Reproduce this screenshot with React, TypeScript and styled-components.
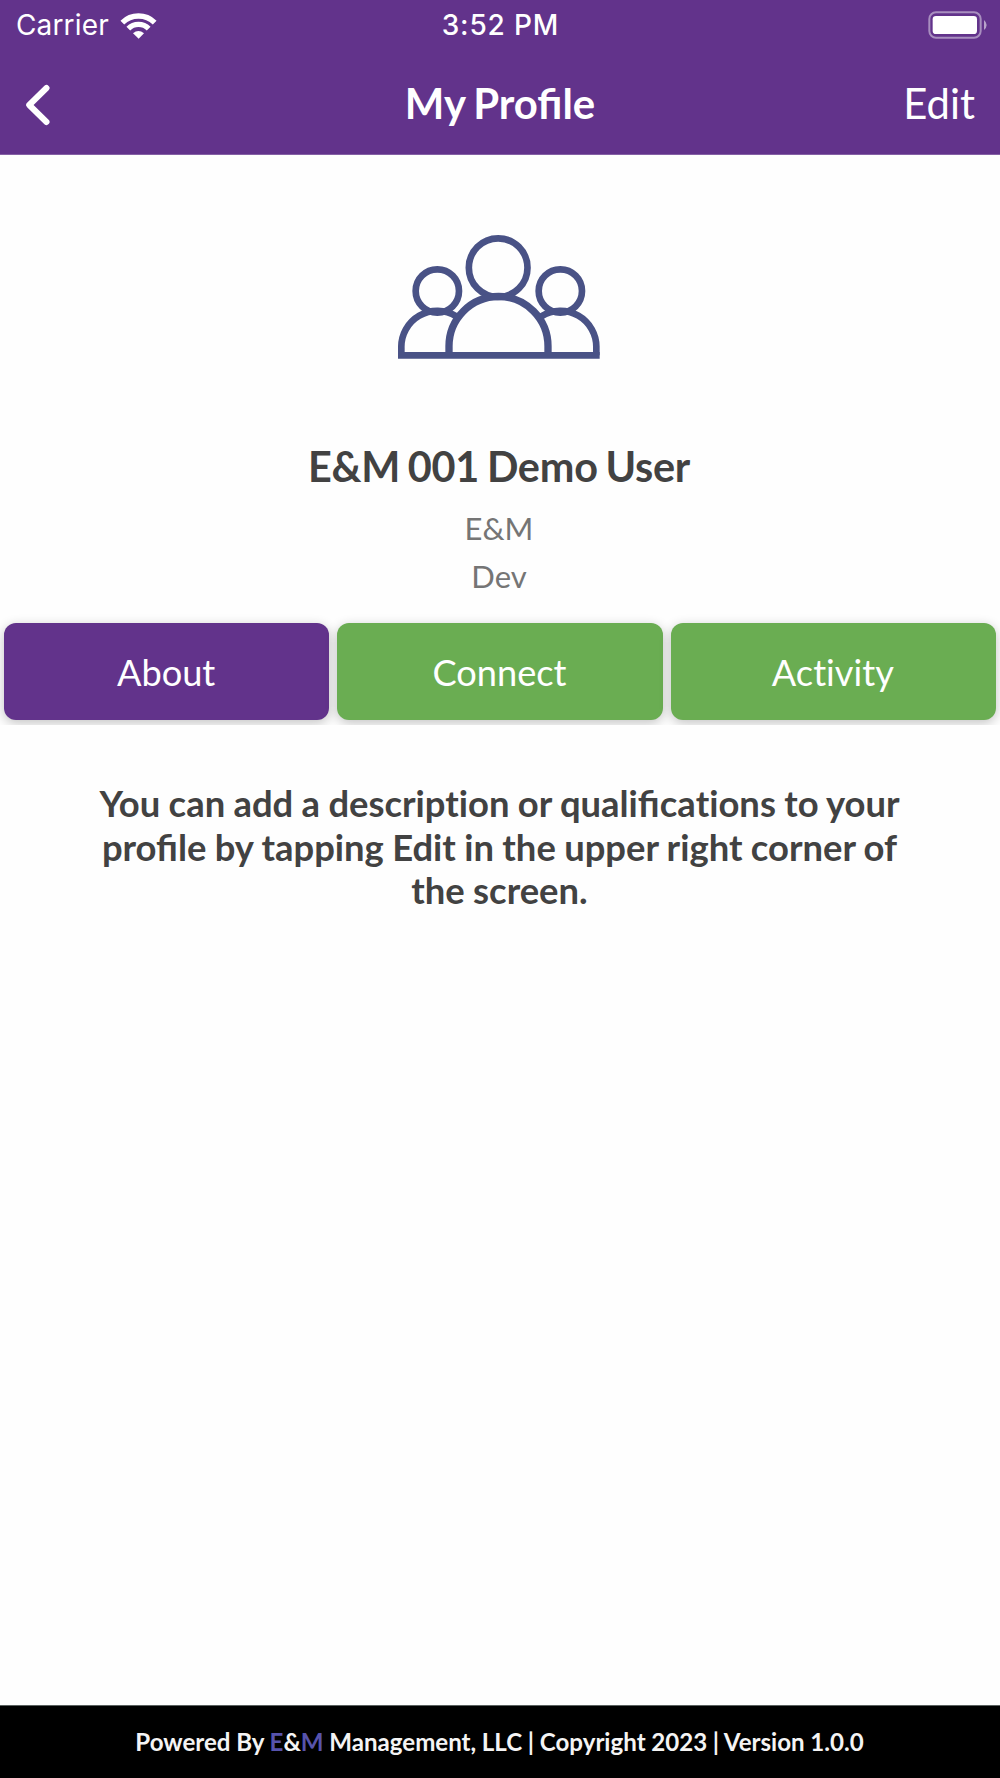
import React from "react";
import styled, { createGlobalStyle } from "styled-components";

const GlobalStyle = createGlobalStyle`
  body { margin: 0; background: #fefefe; }
  * { box-sizing: border-box; }
`;

const Screen = styled.div`
  display: flex;
  flex-direction: column;
  height: 1778px;
  width: 1000px;
  background: #fefefe;
  font-family: Lato, "Open Sans", sans-serif;
  color: #424242;
`;

const Header = styled.header`
  height: 155px;
  background: #62338b;
  color: #fff;
  border-bottom: 1px solid #8560a5;
`;

const StatusBar = styled.div`
  display: grid;
  grid-template-columns: 1fr auto 1fr;
  align-items: center;
  height: 51px;
  padding: 0 12px 0 16px;
  font-family: Inter, Roboto, sans-serif;
  font-size: 28px;
  line-height: 51px;
`;

const Carrier = styled.div`
  display: flex;
  align-items: center;
  gap: 11px;
  letter-spacing: 0.15px;

  svg {
    margin-top: -2px;
  }
`;

const Clock = styled.div`
  margin-right: 3px;
  font-weight: 500;
  letter-spacing: 0.85px;
`;

const Battery = styled.svg`
  justify-self: end;
  margin-top: -2px;
`;

const NavBar = styled.nav`
  display: grid;
  grid-template-columns: 1fr auto 1fr;
  align-items: center;
  height: 103px;
  padding: 0 25px;
`;

const BackButton = styled.button`
  display: flex;
  width: 26px;
  padding: 4px 0 0;
  border: 0;
  background: none;
  color: inherit;
`;

const NavTitle = styled.h1`
  margin: 0;
  font-size: 41.9px;
  font-weight: 700;
  line-height: 50px;
  word-spacing: -2px;
`;

const EditButton = styled.button`
  justify-self: end;
  padding: 0;
  border: 0;
  background: none;
  color: inherit;
  font: 400 41.8px/50px Lato, sans-serif;
`;

const Profile = styled.section`
  display: flex;
  flex-direction: column;
  align-items: center;
  height: 468px;
  padding-top: 65px;
`;

const Name = styled.h2`
  margin: 72px 2px 0 0;
  font-size: 41.4px;
  font-weight: 700;
  letter-spacing: -0.25px;
  line-height: 49px;
  word-spacing: -2px;
`;

const Detail = styled.div`
  margin: 13px 2px 0 0;
  color: #757575;
  font-size: 31px;
  line-height: 48px;

  & + & {
    margin-top: 0;
  }
`;

const Tabs = styled.div`
  display: grid;
  grid-template-columns: repeat(3, 1fr);
  gap: 8px;
  height: 122px;
  margin-top: -20px;
  padding: 20px 4px 5px;
  overflow: hidden;
`;

const Tab = styled.button<{ $active?: boolean }>`
  border: 0;
  border-radius: 12px;
  padding: 1px 1px 0 0;
  background: ${(p) => (p.$active ? "#62338b" : "#6aad52")};
  color: #fff;
  font: 400 36.2px/44px Lato, sans-serif;
  font-variant-ligatures: none;
  box-shadow: 0 3px 12px rgba(0, 0, 0, 0.24);
`;

const Description = styled.p`
  flex: 1;
  width: 840px;
  margin: 57px auto 0;
  padding-right: 1px;
  font-size: 36.4px;
  font-weight: 700;
  line-height: 43.5px;
  text-align: center;
  word-spacing: -0.5px;
`;

const Unjoined = styled.span`
  font-variant-ligatures: none;
`;

const Footer = styled.footer`
  height: 73px;
  padding-right: 1px;
  background: #000;
  border-top: 1px solid #59605e;
  color: #f4f4f4;
  font-size: 24.1px;
  font-weight: 700;
  line-height: 72px;
  text-align: center;
  white-space: nowrap;
  word-spacing: -0.2px;
`;

const Brand = styled.span`
  color: #5753ac;
`;

const WifiIcon = () => (
  <svg width="37" height="28" viewBox="0 0 111 84">
    <g fill="none" stroke="#fff" strokeWidth="16">
      <path d="M7 35A69 69 0 0 1 104 35" />
      <path d="M25 53A43 43 0 0 1 86 53" />
    </g>
    <path d="M39 67Q55 53 72 67L56 83Z" fill="#fff" />
  </svg>
);

const BatteryIcon = () => (
  <Battery width="60" height="28" viewBox="0 0 180 84">
    <rect x="4" y="4" width="154" height="76" rx="20" fill="none" stroke="#fff" strokeOpacity=".45" strokeWidth="6" />
    <rect x="14" y="15" width="133" height="54" rx="10" fill="#fff" />
    <path d="M168 27Q176 34 176 42T168 57Z" fill="#fff" fillOpacity=".55" />
  </Battery>
);

const PeopleIcon = () => (
  <svg width="240" height="150" viewBox="0 0 720 450" fill="none" stroke="#495286" strokeWidth="20">
    <circle cx="172" cy="213" r="65" />
    <circle cx="541" cy="213" r="65" />
    <circle cx="354.500" cy="143" r="88" />
    <path d="M64 406V384A108 108 0 0 1 229 289M649 406V384A108 108 0 0 0 484 289" />
    <path d="M207 406V379A148 149 0 0 1 504 379V406" strokeWidth="22" />
    <path d="M54 406H659" />
  </svg>
);

export default function App() {
  return (
    <Screen>
      <GlobalStyle />
      <Header>
        <StatusBar>
          <Carrier>
            Carrier
            <WifiIcon />
          </Carrier>
          <Clock>3:52 PM</Clock>
          <BatteryIcon />
        </StatusBar>
        <NavBar>
          <BackButton aria-label="Back">
            <svg width="26" height="42" viewBox="0 0 26 42" fill="none" stroke="currentColor" strokeWidth="6">
              <path d="M21.500 4L4.200 21L21.500 38" strokeLinejoin="round" strokeLinecap="round" />
            </svg>
          </BackButton>
          <NavTitle>My Profile</NavTitle>
          <EditButton>Edit</EditButton>
        </NavBar>
      </Header>
      <Profile>
        <PeopleIcon />
        <Name>E&amp;M 001 Demo User</Name>
        <Detail>E&amp;M</Detail>
        <Detail>Dev</Detail>
      </Profile>
      <Tabs>
        <Tab $active>About</Tab>
        <Tab>Connect</Tab>
        <Tab>Activity</Tab>
      </Tabs>
      <Description>
        You can add a <Unjoined>description</Unjoined> or qualifica<Unjoined>tions</Unjoined> to your
        <br />
        profile by tapping Edit in the upper right corner of
        <br />
        the screen.
      </Description>
      <Footer>
        Powered By <Brand>E</Brand>&amp;<Brand>M</Brand> Management, LLC | Copyright 2023 | Version 1.0.0
      </Footer>
    </Screen>
  );
}
